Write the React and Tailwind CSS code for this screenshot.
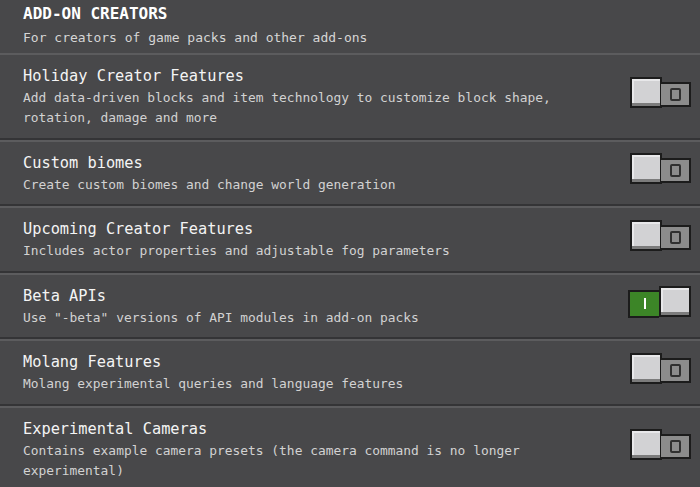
import React from "react";

const rows = [
  {
    title: "Holiday Creator Features",
    desc: "Add data-driven blocks and item technology to customize block shape, rotation, damage and more",
    on: false,
  },
  { title: "Custom biomes", desc: "Create custom biomes and change world generation", on: false },
  {
    title: "Upcoming Creator Features",
    desc: "Includes actor properties and adjustable fog parameters",
    on: false,
  },
  { title: "Beta APIs", desc: 'Use "-beta" versions of API modules in add-on packs', on: true },
  { title: "Molang Features", desc: "Molang experimental queries and language features", on: false },
  {
    title: "Experimental Cameras",
    desc: "Contains example camera presets (the camera command is no longer experimental)",
    on: false,
  },
];

function Knob() {
  return (
    <div className="w-[32px] h-[31px] border-2 border-[#1c1c1c] bg-[#7c7c7c] flex flex-col">
      <div className="flex-1 bg-[#d2d2d4] border-t-2 border-l-2 border-[#e8e8ea] mb-[3px]" />
    </div>
  );
}

function Toggle({ on }) {
  if (on) {
    return (
      <div className="flex items-end">
        <div className="w-[31px] h-[28px] border-2 border-r-0 border-[#1c1c1c] bg-[#3c8527] flex items-center justify-center">
          <div className="w-[2px] h-[11px] bg-white" />
        </div>
        <div className="mb-[1px]">
          <Knob />
        </div>
      </div>
    );
  }
  return (
    <div className="flex items-end">
      <Knob />
      <div className="w-[30px] h-[25px] -ml-[1px] mb-[1px] border-2 border-l-0 border-[#1c1c1c] bg-[#8c8c8c] flex items-center justify-center">
        <div className="w-[11px] h-[13px] border-2 border-[#303030] rounded-[2px]" />
      </div>
    </div>
  );
}

export default function App() {
  return (
    <div
      className="w-[700px] h-[487px] overflow-hidden bg-[#48484a]"
      style={{ fontFamily: '"DejaVu Sans Mono", "Liberation Mono", monospace' }}
    >
      <div className="pl-[23px] pt-[4px] pb-[5px]">
        <div className="text-[16px] leading-[20px] font-bold text-white">ADD-ON CREATORS</div>
        <div className="mt-[4px] text-[13px] leading-[20px] text-[#d6d6d6]">
          For creators of game packs and other add-ons
        </div>
      </div>
      {rows.map((r) => (
        <div
          key={r.title}
          className="flex items-center border-t-2 border-b-2 border-t-[#5c5c5e] border-b-[#343436] pl-[23px] pr-[9px] pt-[11px] pb-[9.5px]"
        >
          <div className="flex-1 max-w-[570px]">
            <div className="text-[15.3px] leading-[20px] text-[#f4f4f4]">{r.title}</div>
            <div className="text-[12.9px] leading-[20px] text-[#d2d2d2] mt-[2px]">{r.desc}</div>
          </div>
          <div className="ml-auto -mt-[10px]">
            <Toggle on={r.on} />
          </div>
        </div>
      ))}
    </div>
  );
}
